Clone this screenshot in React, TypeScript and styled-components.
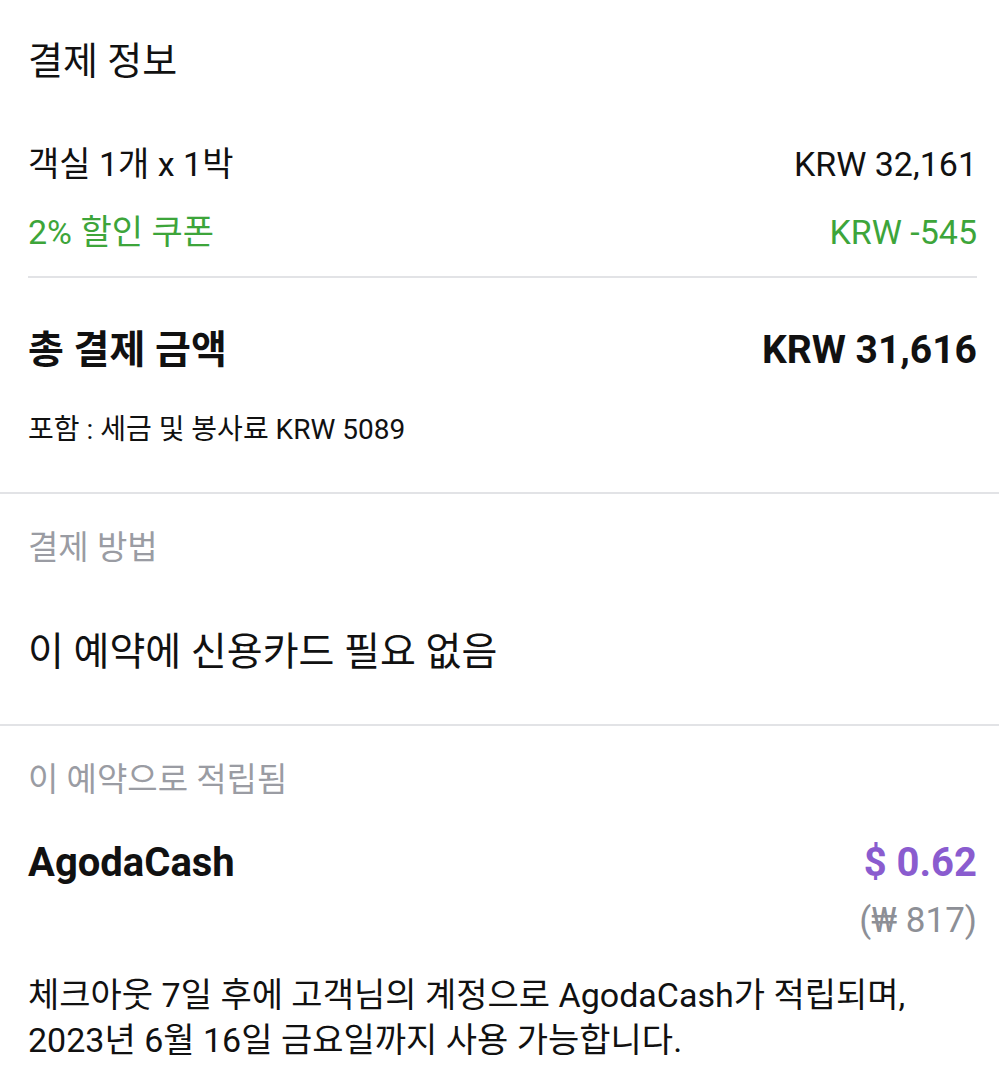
import styled, { createGlobalStyle } from "styled-components";

const GlobalStyle = createGlobalStyle`
  body {
    margin: 0;
    background: #ffffff;
    font-family: Roboto, "Noto Sans CJK KR", sans-serif;
    color: #111111;
  }
`;

const Page = styled.div`
  width: 999px;
  background: #fff;
`;

const Section = styled.section`
  padding: 0 22px 0 28px;
`;

const Title = styled.h2`
  margin: 0;
  padding-top: 38px;
  font-size: 38px;
  font-weight: 400;
  line-height: 46px;
`;

const Row = styled.div<{ $color?: string }>`
  display: flex;
  justify-content: space-between;
  align-items: center;
  font-size: 34px;
  line-height: 44px;
  color: ${(p) => p.$color || "#111111"};
`;

const Lines = styled.div`
  display: flex;
  flex-direction: column;
  gap: 24px;
  padding: 58px 0 22px;
`;

const Rule = styled.hr`
  margin: 0;
  border: 0;
  border-top: 2px solid #e2e3e6;
`;

const TotalRow = styled.div`
  display: flex;
  justify-content: space-between;
  align-items: center;
  padding-top: 48px;
  font-size: 39px;
  font-weight: 700;
  line-height: 48px;
`;

const Note = styled.p`
  margin: 0;
  padding: 38px 0 44px;
  font-size: 28px;
  line-height: 36px;
`;

const Label = styled.div`
  padding-top: 32px;
  font-size: 33px;
  line-height: 44px;
  color: #9a9ca3;
`;

const Statement = styled.p`
  margin: 0;
  padding: 57px 0 47px;
  font-size: 39px;
  line-height: 50px;
`;

const CashRow = styled.div`
  display: flex;
  justify-content: space-between;
  align-items: flex-start;
  padding-top: 37px;
`;

const CashName = styled.div`
  font-size: 40px;
  font-weight: 700;
  line-height: 48px;
`;

const Amounts = styled.div`
  display: flex;
  flex-direction: column;
  align-items: flex-end;
  gap: 14px;
`;

const Usd = styled.div`
  font-size: 40px;
  font-weight: 700;
  line-height: 48px;
  color: #8a5ccf;
`;

const Krw = styled.div`
  font-size: 35px;
  line-height: 40px;
  color: #8d8f96;
`;

const Paragraph = styled.p`
  margin: 0;
  padding: 32px 0 20px;
  font-size: 34px;
  line-height: 45px;
`;

export default function App() {
  return (
    <Page>
      <GlobalStyle />
      <Section>
        <Title>결제 정보</Title>
        <Lines>
          <Row>
            <span>객실 1개 x 1박</span>
            <span>KRW 32,161</span>
          </Row>
          <Row $color="#3da53a">
            <span>2% 할인 쿠폰</span>
            <span>KRW -545</span>
          </Row>
        </Lines>
        <Rule />
        <TotalRow>
          <span>총 결제 금액</span>
          <span>KRW 31,616</span>
        </TotalRow>
        <Note>포함 : 세금 및 봉사료 KRW 5089</Note>
      </Section>
      <Rule />
      <Section>
        <Label>결제 방법</Label>
        <Statement>이 예약에 신용카드 필요 없음</Statement>
      </Section>
      <Rule />
      <Section>
        <Label>이 예약으로 적립됨</Label>
        <CashRow>
          <CashName>AgodaCash</CashName>
          <Amounts>
            <Usd>$ 0.62</Usd>
            <Krw>(₩ 817)</Krw>
          </Amounts>
        </CashRow>
        <Paragraph>
          체크아웃 7일 후에 고객님의 계정으로 AgodaCash가 적립되며,
          <br />
          2023년 6월 16일 금요일까지 사용 가능합니다.
        </Paragraph>
      </Section>
    </Page>
  );
}
